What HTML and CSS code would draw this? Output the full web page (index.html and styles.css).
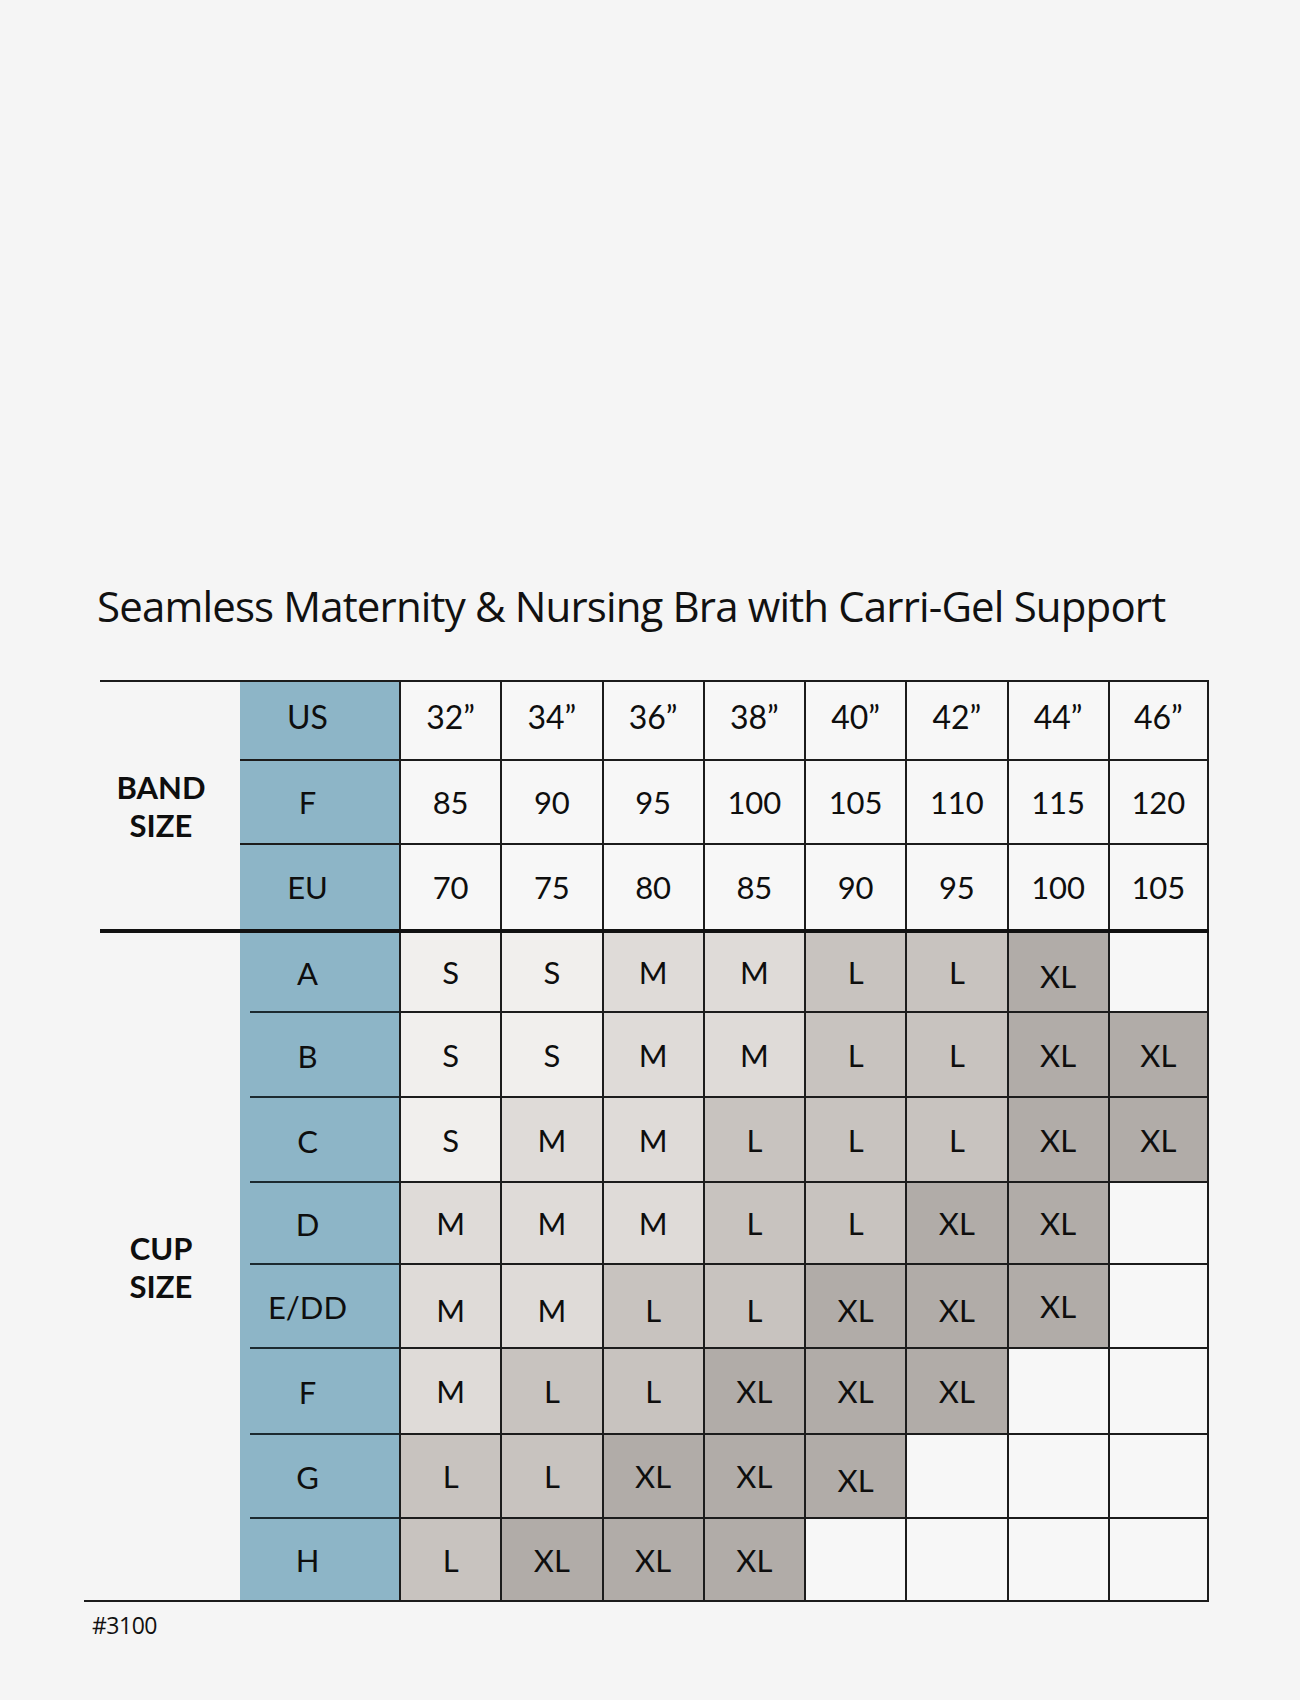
FILE: index.html
```html
<!DOCTYPE html>
<html>
<head>
<meta charset="utf-8">
<link rel="stylesheet" href="styles.css">
</head>
<body>
<div class="page">
  <h1 class="title">Seamless Maternity &amp; Nursing Bra with Carri-Gel Support</h1>
  <div class="chart">
    <div class="band grid">
      <div class="side band-side">BAND<br>SIZE</div>
      <div class="lab r1">US</div>
      <div class="c r1">32”</div><div class="c r1">34”</div><div class="c r1">36”</div><div class="c r1">38”</div><div class="c r1">40”</div><div class="c r1">42”</div><div class="c r1">44”</div><div class="c r1 last">46”</div>
      <div class="lab r2">F</div>
      <div class="c r2">85</div><div class="c r2">90</div><div class="c r2">95</div><div class="c r2">100</div><div class="c r2">105</div><div class="c r2">110</div><div class="c r2">115</div><div class="c r2 last">120</div>
      <div class="lab r3 nob">EU</div>
      <div class="c r3 nob">70</div><div class="c r3 nob">75</div><div class="c r3 nob">80</div><div class="c r3 nob">85</div><div class="c r3 nob">90</div><div class="c r3 nob">95</div><div class="c r3 nob">100</div><div class="c r3 nob last">105</div>
    </div>
    <div class="cup grid">
      <div class="side cup-side">CUP<br>SIZE</div>
      <div class="lab clab">A</div>
      <div class="c s">S</div><div class="c s">S</div><div class="c m">M</div><div class="c m">M</div><div class="c l">L</div><div class="c l">L</div><div class="c xl low">XL</div><div class="c e last"></div>
      <div class="lab clab">B</div>
      <div class="c s">S</div><div class="c s">S</div><div class="c m">M</div><div class="c m">M</div><div class="c l">L</div><div class="c l">L</div><div class="c xl">XL</div><div class="c xl last">XL</div>
      <div class="lab clab">C</div>
      <div class="c s">S</div><div class="c m">M</div><div class="c m">M</div><div class="c l">L</div><div class="c l">L</div><div class="c l">L</div><div class="c xl">XL</div><div class="c xl last">XL</div>
      <div class="lab clab">D</div>
      <div class="c m">M</div><div class="c m">M</div><div class="c m">M</div><div class="c l">L</div><div class="c l">L</div><div class="c xl">XL</div><div class="c xl">XL</div><div class="c e last"></div>
      <div class="lab clab">E/DD</div>
      <div class="c m low">M</div><div class="c m low">M</div><div class="c l low">L</div><div class="c l low">L</div><div class="c xl low">XL</div><div class="c xl low">XL</div><div class="c xl">XL</div><div class="c e last"></div>
      <div class="lab clab">F</div>
      <div class="c m">M</div><div class="c l">L</div><div class="c l">L</div><div class="c xl">XL</div><div class="c xl">XL</div><div class="c xl">XL</div><div class="c e"></div><div class="c e last"></div>
      <div class="lab clab">G</div>
      <div class="c l">L</div><div class="c l">L</div><div class="c xl">XL</div><div class="c xl">XL</div><div class="c xl low">XL</div><div class="c e"></div><div class="c e"></div><div class="c e last"></div>
      <div class="lab nob">H</div>
      <div class="c l nob">L</div><div class="c xl nob">XL</div><div class="c xl nob">XL</div><div class="c xl nob">XL</div><div class="c e nob"></div><div class="c e nob"></div><div class="c e nob"></div><div class="c e nob last"></div>
    </div>
  </div>
  <div class="foot">#3100</div>
</div>
</body>
</html>
```
FILE: styles.css
```css
html, body {
  margin: 0;
  padding: 0;
  background: #f5f5f5;
}
.page {
  width: 1300px;
  height: 1700px;
  font-family: Lato, "Open Sans", sans-serif;
  color: #0e0e0e;
}
.title {
  margin: 0;
  padding: 581px 0 0 97px;
  height: 50px;
  line-height: 50px;
  font-family: "Open Sans", sans-serif;
  font-weight: 400;
  font-size: 42px;
  letter-spacing: -0.85px;
  color: #111;
  white-space: nowrap;
}
.chart {
  margin: 49px 0 0 100px;
  width: 1109px;
  border-top: 2px solid #1c1c1c;
}
.grid {
  display: grid;
  grid-template-columns: 140px 159px repeat(8, 1fr);
}
.band {
  grid-template-rows: 79px 84px 84px;
  border-bottom: 4px solid #111;
}
.cup {
  grid-template-rows: 80px 85px 85px 82px 84px 86px 84px 81px;
}
.side {
  display: flex;
  align-items: center;
  justify-content: center;
  padding-right: 18px;
  text-align: center;
  font-weight: 700;
  font-size: 31px;
  line-height: 38px;
}
.band-side { grid-row: 1 / span 3; grid-column: 1; }
.cup-side { grid-row: 1 / span 8; grid-column: 1; }
.lab {
  display: flex;
  align-items: center;
  justify-content: center;
  padding-right: 24px;
  background: #8db5c7;
  border-bottom: 2px solid #1c1c1c;
  font-size: 31px;
}
.lab.clab {
  border-bottom: 0;
  background: linear-gradient(#1c2a30, #1c2a30) no-repeat right bottom / calc(100% - 10px) 2px, #8db5c7;
}
.c {
  display: flex;
  align-items: center;
  justify-content: center;
  background: #f7f7f7;
  border-left: 2px solid #1c1c1c;
  border-bottom: 2px solid #1c1c1c;
  font-size: 31px;
}
.r1 { font-size: 32px; padding-bottom: 8px; }
.c.last { border-right: 2px solid #1c1c1c; }
.nob { border-bottom: 0 !important; }
.lab.nob { background: #8db5c7; }
.s { background: #f1efed; }
.m { background: #dfdbd8; }
.l { background: #c8c3bf; }
.xl { background: #b1aca8; }
.e { background: #f7f7f7; }
.low { padding-top: 8px; }
.foot {
  box-sizing: border-box;
  margin-left: 84px;
  width: 1125px;
  border-top: 2px solid #1c1c1c;
  padding: 8px 0 0 8px;
  font-family: "Open Sans", sans-serif;
  font-size: 23px;
  letter-spacing: -0.5px;
  line-height: 30px;
  color: #111;
}
```
